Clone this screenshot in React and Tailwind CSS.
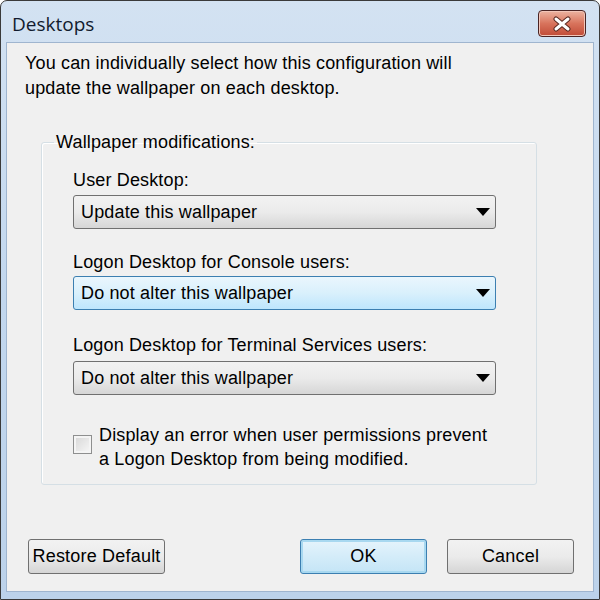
import { useState } from "react";

const font = { fontFamily: '"Liberation Sans", Arial, sans-serif' };

function Combo({ value, active }) {
  return (
    <div
      className={
        "flex items-center justify-between h-[34px] w-[423px] rounded-[3px] border pl-[7px] pr-[5px] text-[18px] tracking-[0.15px] text-black " +
        (active
          ? "border-[#3c7fb1] bg-gradient-to-b from-[#eaf6fd] via-[#d9f0fc] to-[#bee6fd]"
          : "border-[#707070] bg-gradient-to-b from-[#f2f2f2] via-[#ebebeb] to-[#d6d6d6]")
      }
    >
      <span>{value}</span>
      <svg width="14" height="8" viewBox="0 0 14 8">
        <path d="M0 0 H14 L7 8 Z" fill="#000" />
      </svg>
    </div>
  );
}

function Btn({ children, focused, className }) {
  return (
    <button
      className={
        "h-[35px] rounded-[3px] border text-[18px] tracking-[0.2px] text-black " +
        (focused
          ? "border-[#3c7fb1] bg-gradient-to-b from-[#e5f4fc] via-[#d4ecf9] to-[#c4e5f6] shadow-[inset_0_0_0_2px_#a8d8f0] "
          : "border-[#707070] bg-gradient-to-b from-[#f2f2f2] via-[#ebebeb] to-[#d5d5d5] ") +
        className
      }
    >
      {children}
    </button>
  );
}

export default function App() {
  const [checked, setChecked] = useState(false);

  return (
    <div
      className="w-[600px] h-[600px] flex flex-col rounded-t-[7px] border border-[#3a3a3a] bg-gradient-to-b from-[#d3e2f2] via-[#c2d7ee] to-[#bcd2ea] overflow-hidden"
      style={font}
    >
      {/* title bar */}
      <div className="h-[41px] flex items-start justify-between pl-[11px] pr-[13px]">
        <span
          className="mt-[9px] text-[19px] text-[#111b2e]"
          style={{ fontFamily: '"Open Sans", "Liberation Sans", sans-serif' }}
        >
          Desktops
        </span>
        <div className="mt-[9px] w-[48px] h-[27px] rounded-[4px] border border-[#4a2424] bg-gradient-to-b from-[#ebb3a1] via-[#d8735c] to-[#c04a36] flex items-center justify-center shadow-[inset_0_0_0_1px_#f2c5b8]">
          <svg width="20" height="16" viewBox="0 0 20 16">
            <path d="M4 3 L16 13 M16 3 L4 13" stroke="#5a2a22" strokeWidth="5" strokeLinecap="round" />
            <path d="M4 3 L16 13 M16 3 L4 13" stroke="#fff" strokeWidth="3" strokeLinecap="round" />
          </svg>
        </div>
      </div>

      {/* client area */}
      <div className="flex-1 mx-[5px] mb-[7px] border border-[#9fb5cf] bg-[#f0f0f0] flex flex-col text-[18px] tracking-[0.15px] text-black">
        <p className="pl-[18px] pt-[8px] leading-[25px]">
          You can individually select how this configuration will
          <br />
          update the wallpaper on each desktop.
        </p>

        <fieldset className="ml-[34px] mt-[30px] w-[496px] h-[354px] rounded-[3px] border border-[#d5dfe5] shadow-[inset_1px_1px_0_#fff]">
          <legend className="ml-[12px] px-[2px] leading-[22px]">Wallpaper modifications:</legend>

          <div className="pl-[31px]">
            <div className="mt-[16px] leading-[22px]">User Desktop:</div>
            <div className="mt-[4px]">
              <Combo value="Update this wallpaper" />
            </div>

            <div className="mt-[22px] leading-[22px]">Logon Desktop for Console users:</div>
            <div className="mt-[3px]">
              <Combo value="Do not alter this wallpaper" active />
            </div>

            <div className="mt-[24px] leading-[22px]">Logon Desktop for Terminal Services users:</div>
            <div className="mt-[5px]">
              <Combo value="Do not alter this wallpaper" />
            </div>

            <label className="mt-[28px] flex items-start gap-[7px] cursor-pointer">
              <span
                onClick={() => setChecked(!checked)}
                className="mt-[12px] w-[19px] h-[19px] shrink-0 border border-[#8e8f8f] bg-gradient-to-br from-[#d6d6d6] to-[#f8f8f8] shadow-[inset_0_0_0_2px_#f4f4f4] flex items-center justify-center text-[13px]"
              >
                {checked ? "✓" : ""}
              </span>
              <span className="leading-[24px]">
                Display an error when user permissions prevent
                <br />
                a Logon Desktop from being modified.
              </span>
            </label>
          </div>
        </fieldset>

        <div className="mt-auto mb-[17px] flex items-center pl-[21px] pr-[19px]">
          <Btn className="w-[137px]">Restore Default</Btn>
          <Btn focused className="ml-auto w-[127px]">
            OK
          </Btn>
          <Btn className="ml-[20px] w-[127px]">Cancel</Btn>
        </div>
      </div>
    </div>
  );
}
